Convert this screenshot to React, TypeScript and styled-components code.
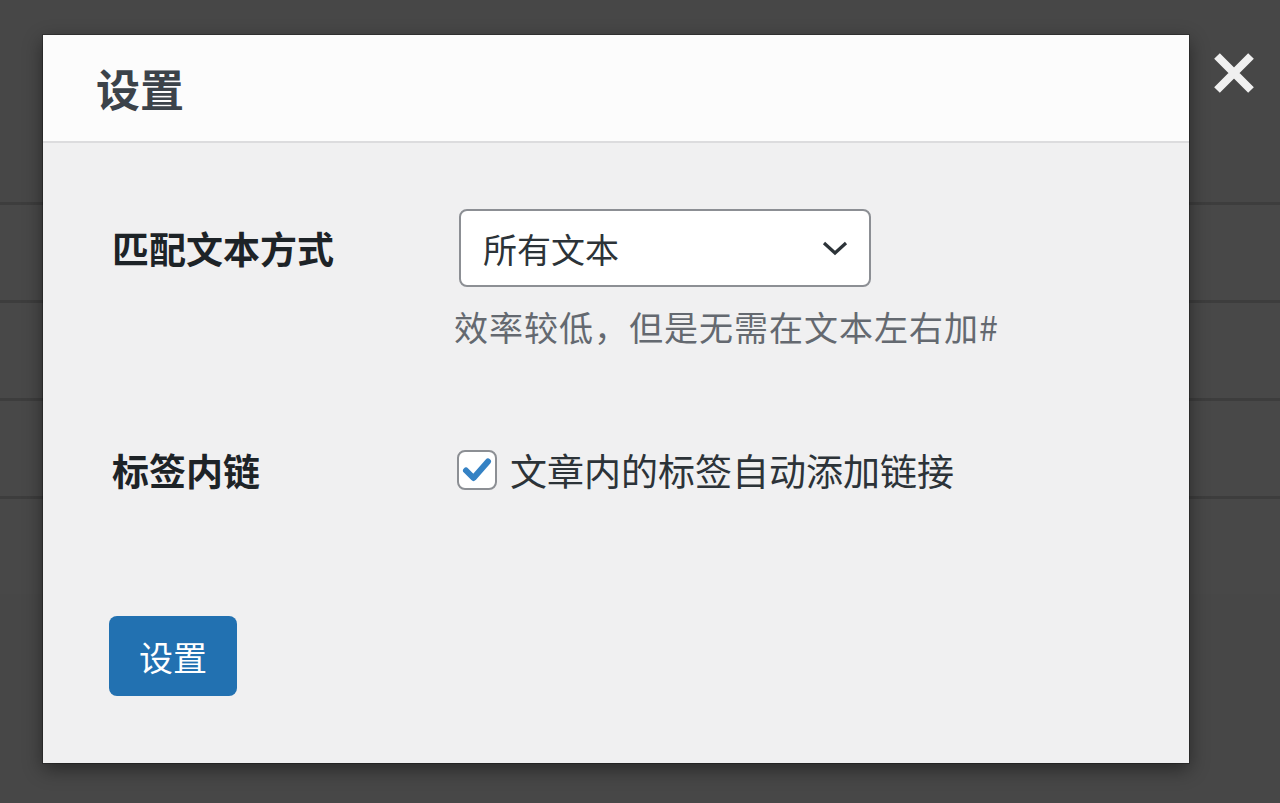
import React, { useState } from "react";
import styled, { createGlobalStyle } from "styled-components";

const GlobalStyle = createGlobalStyle`
  html, body {
    margin: 0;
    padding: 0;
    height: 100%;
    background: #474747;
    font-family: "Noto Sans CJK SC", "Noto Sans", sans-serif;
  }
  #root {
    height: 100%;
  }
`;

const ROWS = [0, 1, 2, 3];

const App = () => {
  const [checked, setChecked] = useState<boolean>(true);
  const [mode, setMode] = useState<string>("all");

  return (
    <Page>
      <GlobalStyle />
      <BackList>
        {ROWS.map((x) => (
          <BackRow key={x} />
        ))}
      </BackList>

      <Overlay>
        <Modal>
          <Header>
            <Title>设置</Title>
          </Header>
          <Body>
            <FormRow>
              <Label>匹配文本方式</Label>
              <Field>
                <SelectBox>
                  <Select value={mode} onChange={(e) => setMode(e.target.value)}>
                    <option value="all">所有文本</option>
                    <option value="tag">#标签#</option>
                  </Select>
                  <Chevron viewBox="0 0 28 16">
                    <path d="M3 3 L14 13 L25 3" />
                  </Chevron>
                </SelectBox>
                <Help>效率较低，但是无需在文本左右加#</Help>
              </Field>
            </FormRow>

            <FormRow $gap={99}>
              <Label $short>标签内链</Label>
              <CheckLine onClick={() => setChecked(!checked)}>
                <Box>
                  {checked && (
                    <svg viewBox="0 0 40 40" width="40" height="40">
                      <path d="M9 20.5 L16.5 28 L31 11.5" />
                    </svg>
                  )}
                </Box>
                <CheckText>文章内的标签自动添加链接</CheckText>
              </CheckLine>
            </FormRow>

            <Submit>设置</Submit>
          </Body>
        </Modal>

        <Close aria-label="关闭">
          <svg viewBox="0 0 42 42" width="42" height="42">
            <path d="M4 4 L38 38 M38 4 L4 38" />
          </svg>
        </Close>
      </Overlay>
    </Page>
  );
};
export default App;

const Page = styled.div`
  position: relative;
  width: 100%;
  height: 100%;
  overflow: hidden;
`;

const BackList = styled.div`
  padding-top: 202px;
`;

const BackRow = styled.div`
  height: 95px;
  border-top: 3px solid #3d3d3d;
  background: #484848;
`;

const Overlay = styled.div`
  position: absolute;
  inset: 0;
  display: flex;
  align-items: flex-start;
  padding: 35px 0 0 43px;
`;

const Modal = styled.div`
  width: 1146px;
  height: 728px;
  background: #f0f0f1;
  box-shadow: 0 0 0 1px rgba(0, 0, 0, 0.25), 0 6px 18px rgba(0, 0, 0, 0.45);
  display: flex;
  flex-direction: column;
`;

const Header = styled.div`
  height: 106px;
  background: #fcfcfc;
  border-bottom: 2px solid #dcdcde;
  display: flex;
  align-items: center;
  padding-left: 53px;
`;

const Title = styled.h1`
  margin: 0;
  font-size: 44px;
  font-weight: 700;
  color: #3c434a;
  line-height: 1;
`;

const Body = styled.div`
  padding: 66px 69px 0 69px;
`;

const FormRow = styled.div<{ $gap?: number }>`
  display: grid;
  grid-template-columns: 345px 1fr;
  align-items: start;
  margin-top: ${({ $gap }) => ($gap ? `${$gap}px` : "0")};
`;

const Label = styled.div<{ $short?: boolean }>`
  font-size: 37px;
  font-weight: 700;
  color: #1d2327;
  line-height: ${({ $short }) => ($short ? "44px" : "78px")};
  height: ${({ $short }) => ($short ? "44px" : "78px")};
`;

const Field = styled.div`
  display: flex;
  flex-direction: column;
  margin-left: 2px;
`;

const SelectBox = styled.div`
  position: relative;
  width: 412px;
  height: 78px;
`;

const Select = styled.select`
  appearance: none;
  width: 100%;
  height: 100%;
  box-sizing: border-box;
  border: 2px solid #8c8f94;
  border-radius: 8px;
  background: #fff;
  padding: 0 60px 0 22px;
  font-family: "Noto Sans CJK SC", "Noto Sans", sans-serif;
  font-size: 34px;
  color: #2c3338;
  outline: none;
`;

const Chevron = styled.svg`
  position: absolute;
  right: 22px;
  top: 31px;
  width: 28px;
  height: 16px;
  pointer-events: none;
  path {
    fill: none;
    stroke: #2c3338;
    stroke-width: 3.2;
  }
`;

const Help = styled.p`
  margin: 18px 0 0 -5px;
  font-size: 34px;
  letter-spacing: 1px;
  line-height: 44px;
  color: #646970;
`;

const CheckLine = styled.label`
  display: flex;
  align-items: center;
  gap: 13px;
  cursor: pointer;
`;

const Box = styled.span`
  width: 40px;
  height: 40px;
  box-sizing: border-box;
  border: 2px solid #8c8f94;
  border-radius: 8px;
  background: #fff;
  display: flex;
  align-items: center;
  justify-content: center;
  svg {
    margin: -2px;
  }
  path {
    fill: none;
    stroke: #3582c4;
    stroke-width: 6;
    stroke-linecap: round;
    stroke-linejoin: round;
  }
`;

const CheckText = styled.span`
  font-size: 37px;
  line-height: 44px;
  color: #2c3338;
`;

const Submit = styled.button`
  display: block;
  margin: 124px 0 0 -3px;
  width: 128px;
  height: 80px;
  border: none;
  border-radius: 8px;
  background: #2271b1;
  color: #fff;
  font-family: "Noto Sans CJK SC", "Noto Sans", sans-serif;
  font-size: 34px;
  cursor: pointer;
`;

const Close = styled.button`
  margin: 17px 0 0 24px;
  padding: 0;
  border: none;
  background: transparent;
  width: 42px;
  height: 42px;
  cursor: pointer;
  path {
    stroke: #f0f0f0;
    stroke-width: 8;
  }
`;
